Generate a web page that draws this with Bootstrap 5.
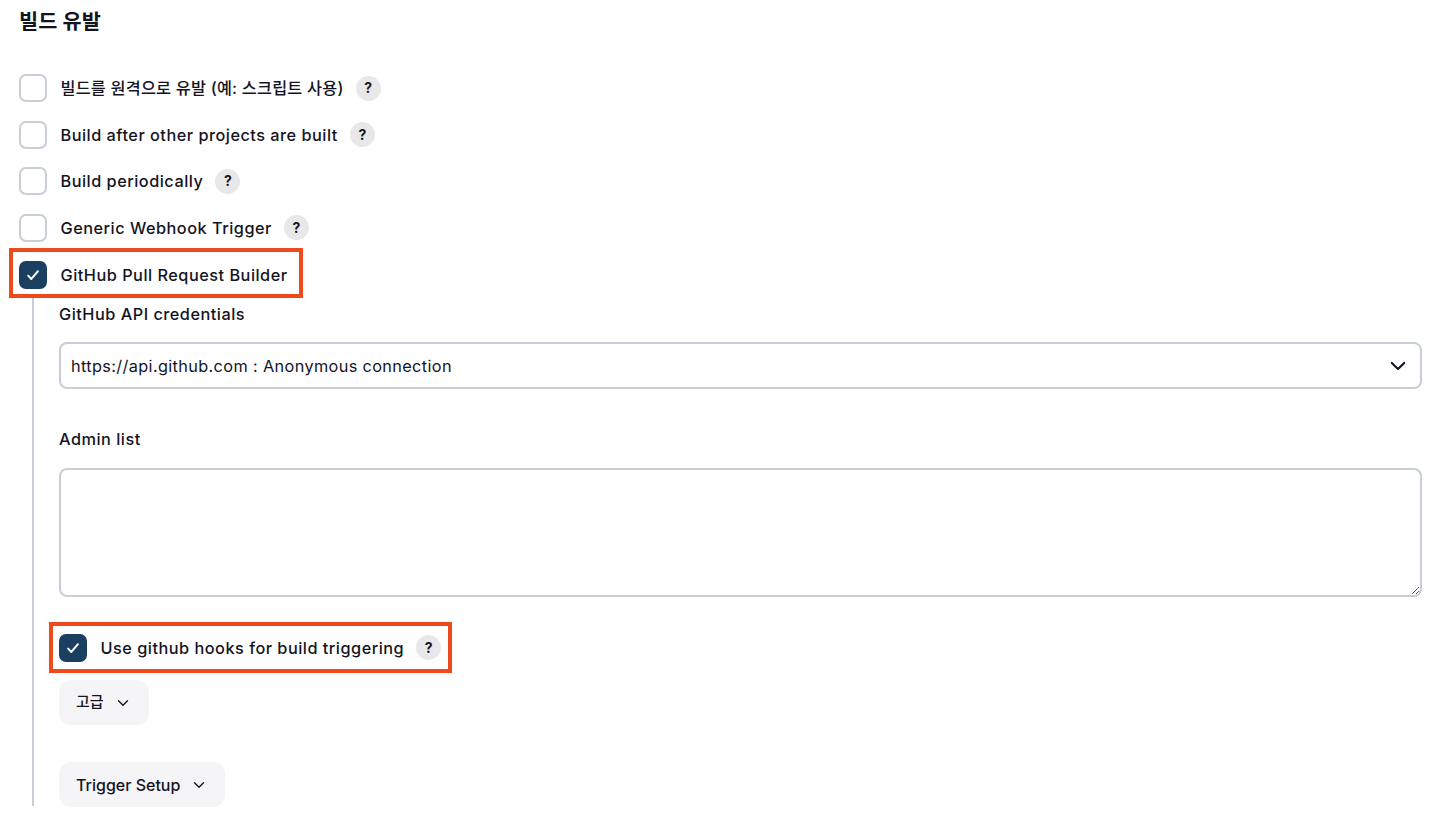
<!DOCTYPE html>
<html lang="ko">
<head>
<meta charset="utf-8">
<title>빌드 유발</title>
<link href="https://cdn.jsdelivr.net/npm/bootstrap@5.3.0/dist/css/bootstrap.min.css" rel="stylesheet">
<style>
html,body{height:819px;overflow:hidden;background:#fff}
body{font-family:Inter,"Noto Sans CJK KR",sans-serif;color:#14141f;font-size:16.3px;font-weight:450;line-height:24px;letter-spacing:.5px}
.page-wrap{padding:0 22px 0 19px}
.sec-title{font-size:20.8px;font-weight:600;line-height:24px;margin:10px 0 31px;letter-spacing:0}
.trig-row{height:46.5px;gap:13.5px}
.ko-text{letter-spacing:.2px}
.trig-row .form-check-input{width:28px;height:28px;margin:0;flex:none;border:2.5px solid #c8ced6;border-radius:7px;background-color:#fff;float:none}
.trig-row .form-check-input:checked{background-color:#1a3f60;border-color:#1a3f60;background-size:18px;background-image:url("data:image/svg+xml,%3csvg xmlns='http://www.w3.org/2000/svg' viewBox='0 0 24 24'%3e%3cpath fill='none' stroke='%23fff' stroke-linecap='round' stroke-linejoin='round' stroke-width='2.6' d='M5.5 12.8l4.3 4.5 8.7-10.3'/%3e%3c/svg%3e")}
.help-dot{width:25px;height:25px;border-radius:50%;background:#e8e8ea;font-size:14px;font-weight:700;margin-left:-1.5px;flex:none;letter-spacing:0}
.mark-box{border:4px solid #ef4a1b;margin:-3px 0 0 -10px;height:50px;padding:4px 10px 0 6px;width:294px;box-sizing:border-box}
.nested{margin-left:13px;border-left:2px solid #c8ced6;padding-left:25px;height:508px}
.fld-label{line-height:24px;padding-top:4px;margin-bottom:16px;display:block}
.pick{height:47px;border:2px solid #c8ced6;border-radius:8px;color:#14141f;font-weight:400;font-size:16.3px;letter-spacing:.36px;padding:1px 40px 0 10px;background-size:22px;background-position:right 11px center;margin-bottom:34px;background-image:url("data:image/svg+xml,%3csvg xmlns='http://www.w3.org/2000/svg' viewBox='0 0 512 512'%3e%3cpath fill='none' stroke='%2314141f' stroke-linecap='round' stroke-linejoin='round' stroke-width='48' d='M112 184l144 144 144-144'/%3e%3c/svg%3e")}
.area{height:129px;border:2px solid #c8ced6;border-radius:8px;margin-top:17px;margin-bottom:25px}
.hook-box{border:4px solid #ef4a1b;margin-left:-10px;width:403px;height:51px;box-sizing:border-box;padding:0 0 0 6px}
.soft-btn{background:#f5f5f8;border:0;border-radius:12px;height:45px;color:#14141f;font-size:16px;font-weight:450;letter-spacing:0;padding:0 17px;gap:11px;white-space:nowrap}
.soft-btn:hover{background:#f5f5f8;color:#14141f}
.soft-btn svg{flex:none}
.adv-btn{margin:7px 0 37px;width:90px}
.adv-btn span{font-size:15px}
.setup-btn{width:166px}
</style>
</head>
<body>
<div class="page-wrap">
  <h1 class="sec-title">빌드 유발</h1>
  <div class="d-flex align-items-center trig-row"><input class="form-check-input" type="checkbox" aria-label="원격"><span class="ko-text">빌드를 원격으로 유발 (예: 스크립트 사용)</span><span class="help-dot d-flex align-items-center justify-content-center">?</span></div>
  <div class="d-flex align-items-center trig-row"><input class="form-check-input" type="checkbox" aria-label="after"><span>Build after other projects are built</span><span class="help-dot d-flex align-items-center justify-content-center">?</span></div>
  <div class="d-flex align-items-center trig-row"><input class="form-check-input" type="checkbox" aria-label="periodic"><span>Build periodically</span><span class="help-dot d-flex align-items-center justify-content-center">?</span></div>
  <div class="d-flex align-items-center trig-row"><input class="form-check-input" type="checkbox" aria-label="webhook"><span>Generic Webhook Trigger</span><span class="help-dot d-flex align-items-center justify-content-center">?</span></div>
  <div class="d-flex align-items-center trig-row mark-box"><input class="form-check-input" type="checkbox" checked aria-label="ghprb"><span>GitHub Pull Request Builder</span></div>
  <div class="nested">
    <label class="fld-label">GitHub API credentials</label>
    <select class="form-select pick"><option>https://api.github.com : Anonymous connection</option></select>
    <label class="fld-label">Admin list</label>
    <textarea class="form-control area"></textarea>
    <div class="d-flex align-items-center hook-box trig-row"><input class="form-check-input" type="checkbox" checked aria-label="hooks"><span>Use github hooks for build triggering</span><span class="help-dot d-flex align-items-center justify-content-center">?</span></div>
    <button type="button" class="btn soft-btn adv-btn d-flex align-items-center"><span>고급</span><svg width="16" height="16" viewBox="0 0 512 512" aria-hidden="true"><path fill="none" stroke="#14141f" stroke-linecap="round" stroke-linejoin="round" stroke-width="44" d="M112 184l144 144 144-144"/></svg></button>
    <button type="button" class="btn soft-btn setup-btn d-flex align-items-center"><span>Trigger Setup</span><svg width="16" height="16" viewBox="0 0 512 512" aria-hidden="true"><path fill="none" stroke="#14141f" stroke-linecap="round" stroke-linejoin="round" stroke-width="44" d="M112 184l144 144 144-144"/></svg></button>
  </div>
</div>
<script src="https://cdn.jsdelivr.net/npm/bootstrap@5.3.0/dist/js/bootstrap.bundle.min.js"></script>
</body>
</html>
